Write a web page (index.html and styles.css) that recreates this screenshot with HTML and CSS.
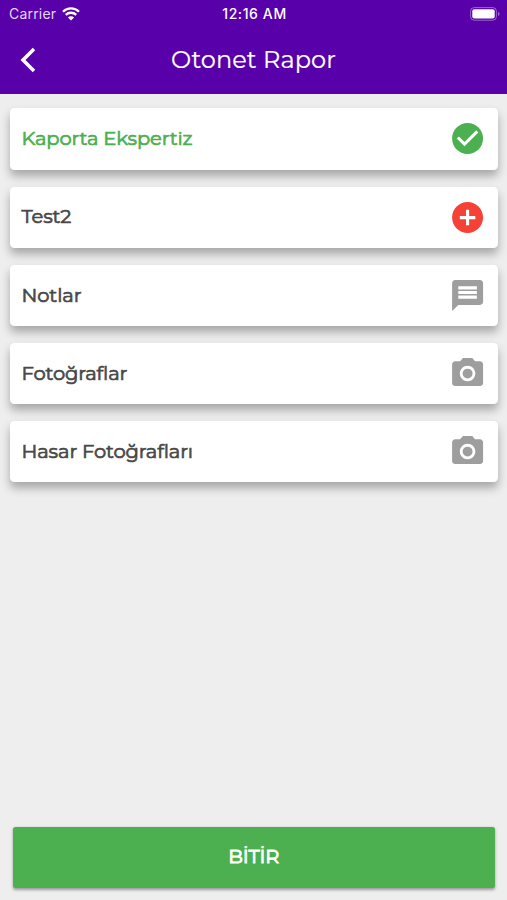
FILE: index.html
```html
<!DOCTYPE html>
<html lang="tr">
<head>
  <meta charset="UTF-8" />
  <meta name="viewport" content="width=device-width, initial-scale=1" />
  <title>Otonet Rapor</title>
  <link rel="stylesheet" href="styles.css">
</head>
<body>
  <header class="header">
    <div class="status-bar">
      <div class="carrier">
        <span>Carrier</span>
        <svg class="wifi" viewBox="0 0 18 14">
          <path d="M1 4.7a11.4 11.4 0 0 1 16 0M3.8 7.9a7.4 7.4 0 0 1 10.4 0" fill="none" stroke="#fff" stroke-width="2.3" />
          <path d="M9 13.6L5.9 10.5a4.4 4.4 0 0 1 6.2 0z" fill="#fff" />
        </svg>
      </div>
      <div class="time">12:16 AM</div>
      <svg class="battery" viewBox="0 0 30 14">
        <rect x=".6" y=".6" width="25.8" height="12.6" rx="3.6" fill="none" stroke="#fff" stroke-opacity=".4" />
        <rect x="2.3" y="2.3" width="22.4" height="9.2" rx="2" fill="#fff" />
        <path d="M28 4.8v4.2q1.6-.6 1.6-2.1t-1.6-2.1z" fill="#fff" fill-opacity=".4" />
      </svg>
    </div>
    <div class="nav-bar">
      <svg class="back" viewBox="0 0 16 26">
        <path d="M14 2L3 13l11 11" fill="none" stroke="#fff" stroke-width="3.5" />
      </svg>
      <h1>Otonet Rapor</h1>
    </div>
  </header>

  <main class="list">
    <div class="card done">
      <span>Kaporta Ekspertiz</span>
      <svg class="icon" viewBox="0 0 24 24"><path d="M12 2C6.48 2 2 6.48 2 12s4.48 10 10 10 10-4.48 10-10S17.52 2 12 2zm-2 15l-5-5 1.41-1.41L10 14.17l7.59-7.59L19 8l-9 9z" /></svg>
    </div>
    <div class="card missing">
      <span>Test2</span>
      <svg class="icon" viewBox="0 0 24 24"><path d="M12 2C6.48 2 2 6.48 2 12s4.48 10 10 10 10-4.48 10-10S17.52 2 12 2zm5 11h-4v4h-2v-4H7v-2h4V7h2v4h4v2z" /></svg>
    </div>
    <div class="card">
      <span>Notlar</span>
      <svg class="icon" viewBox="0 0 24 24"><path d="M20 2H4c-1.1 0-1.99.9-1.99 2L2 22l4-4h14c1.1 0 2-.9 2-2V4c0-1.1-.9-2-2-2zm-2 12H6v-2h12v2zm0-3H6V9h12v2zm0-3H6V6h12v2z" /></svg>
    </div>
    <div class="card">
      <span>Fotoğraflar</span>
      <svg class="icon" viewBox="0 0 24 24"><circle cx="12" cy="12" r="3.2" /><path d="M9 2L7.17 4H4c-1.1 0-2 .9-2 2v12c0 1.1.9 2 2 2h16c1.1 0 2-.9 2-2V6c0-1.1-.9-2-2-2h-3.17L15 2H9zm3 15c-2.76 0-5-2.24-5-5s2.24-5 5-5 5 2.24 5 5-2.24 5-5 5z" /></svg>
    </div>
    <div class="card">
      <span>Hasar Fotoğrafları</span>
      <svg class="icon" viewBox="0 0 24 24"><circle cx="12" cy="12" r="3.2" /><path d="M9 2L7.17 4H4c-1.1 0-2 .9-2 2v12c0 1.1.9 2 2 2h16c1.1 0 2-.9 2-2V6c0-1.1-.9-2-2-2h-3.17L15 2H9zm3 15c-2.76 0-5-2.24-5-5s2.24-5 5-5 5 2.24 5 5-2.24 5-5 5z" /></svg>
    </div>
  </main>

  <button class="finish" type="button">BİTİR</button>
</body>
</html>
```
FILE: styles.css
```css
* {
  box-sizing: border-box;
}
body {
  margin: 0;
  height: 100vh;
  display: flex;
  flex-direction: column;
  background: #eee;
  color: #484848;
  font-family: 'Montserrat', 'Inter', sans-serif;
}
.header {
  height: 94px;
  background: #5800a9;
  color: #fff;
}
.status-bar {
  height: 27px;
  padding: 0 7px 0 9px;
  display: grid;
  grid-template-columns: 1fr auto 1fr;
  align-items: center;
  font-family: 'Inter', sans-serif;
  font-size: 14px;
}
.carrier {
  display: flex;
  align-items: center;
  gap: 6px;
  color: #e6d6f4;
  letter-spacing: 0.2px;
}
.wifi {
  width: 18px;
  height: 14px;
}
.time {
  font-weight: 500;
  font-size: 14px;
  letter-spacing: 0.6px;
}
.battery {
  width: 30px;
  height: 14px;
  justify-self: end;
}
.nav-bar {
  height: 65px;
  padding: 0 20px;
  display: grid;
  grid-template-columns: 1fr auto 1fr;
  align-items: center;
}
.back {
  width: 16px;
  height: 26px;
}
h1 {
  margin: 0;
  font-size: 24px;
  font-weight: 400;
  letter-spacing: 0.1px;
  -webkit-text-stroke: 0.2px;
}
.list {
  flex: 1;
  padding: 14.4px 9px 0 9.5px;
  display: flex;
  flex-direction: column;
  gap: 17px;
}
.card {
  height: 61.2px;
  padding: 0 12px;
  display: flex;
  align-items: center;
  justify-content: space-between;
  background: #fff;
  border-radius: 4.5px;
  box-shadow: 0 6px 10px rgba(0, 0, 0, 0.3);
  font-size: 19.5px;
  letter-spacing: -0.12px;
  -webkit-text-stroke: 0.7px;
}
.card span {
  padding-bottom: 1.4px;
}
.icon {
  width: 37.2px;
  height: 37.2px;
  fill: #9e9e9e;
}
.done {
  color: #4caf50;
}
.done .icon {
  fill: #4caf50;
}
.missing .icon {
  fill: #f44336;
}
.finish {
  height: 61.5px;
  margin: 0 12.5px 12px 13px;
  padding-bottom: 3px;
  border: none;
  border-radius: 2.5px;
  background: #4caf50;
  color: #fff;
  font-family: inherit;
  font-size: 19.5px;
  letter-spacing: -0.12px;
  -webkit-text-stroke: 0.9px;
  box-shadow: 0 1.5px 3px rgba(0, 0, 0, 0.35);
}
```
